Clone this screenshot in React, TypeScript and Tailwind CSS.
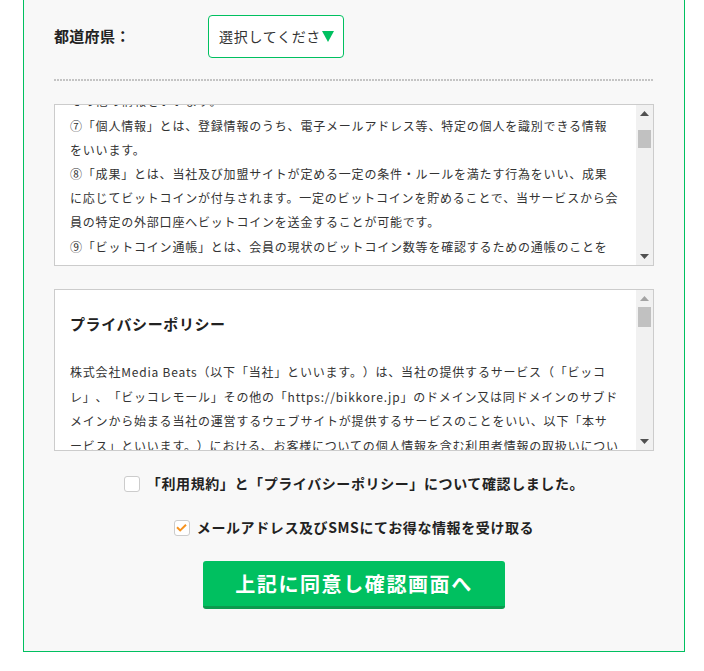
import { useEffect, useRef } from 'react';

const FONT = { fontFamily: '"Noto Sans CJK JP", "Noto Sans", sans-serif' };

// 利用規約（途中までスクロールした状態で表示）
const termsBefore = [
  '⑤「会員」とは、本規約に同意の上、当社所定の手続きにより登録を行った個人をいいます。',
  '⑥「登録情報」とは、会員が本サービスの利用にあたり当社に提供した氏名、住所、生年月日その他の情報をいいます。',
];

const termsAfter = [
  '⑧「成果」とは、当社及び加盟サイトが定める一定の条件・ルールを満たす行為をいい、成果に応じてビットコインが付与されます。一定のビットコインを貯めることで、当サービスから会員の特定の外部口座へビットコインを送金することが可能です。',
  '⑨「ビットコイン通帳」とは、会員の現状のビットコイン数等を確認するための通帳のことをいいます。',
  '⑩「加盟サイト」とは、本サービスに広告を掲載し、会員に対して商品またはサービスを提供する事業者のウェブサイトをいいます。',
  '第3条（規約の変更）',
  '当社は、会員の事前の承諾を得ることなく、本規約を随時変更できるものとします。変更後の本規約は、当社が別途定める場合を除き、本サービス上に表示した時点より効力を生じるものとします。',
  '第4条（会員登録）',
  '本サービスの利用を希望する者は、本規約に同意の上、当社所定の方法により会員登録を申請するものとします。当社は、当社の基準に従って登録の可否を判断し、当社が登録を認めた場合にはその旨を通知します。',
  '第5条（アカウントの管理）',
  '会員は、自己の責任においてメールアドレス及びパスワードを管理するものとし、これを第三者に利用させ、または貸与、譲渡、売買等をしてはならないものとします。',
  '第6条（ビットコインの付与）',
  '当社は、会員が成果の条件を満たした場合、当社所定の数のビットコインを付与します。付与の時期及び数量は、加盟サイトごとに当社が別途定めるところによります。',
];

// 見た目用のスクロールバー（クラシック表示）
function ScrollBar({ thumbTop, thumbHeight, atTop }: { thumbTop: number; thumbHeight: number; atTop?: boolean }) {
  return (
    <div className="absolute top-0 right-0 bottom-0 flex w-[17px] flex-col bg-[#f1f1f1]">
      <div className="flex h-[17px] items-center justify-center">
        <svg width="9" height="5" viewBox="0 0 9 5">
          <polygon points="0,5 9,5 4.5,0" fill={atTop ? '#a3a3a3' : '#505050'} />
        </svg>
      </div>
      <div className="absolute right-[2px] left-[2px] bg-[#c1c1c1]" style={{ top: thumbTop, height: thumbHeight }} />
      <div className="mt-auto flex h-[17px] items-center justify-center">
        <svg width="9" height="5" viewBox="0 0 9 5">
          <polygon points="0,0 9,0 4.5,5" fill="#505050" />
        </svg>
      </div>
    </div>
  );
}

export default function App() {
  const termsRef = useRef<HTMLDivElement>(null);
  const anchorRef = useRef<HTMLParagraphElement>(null);

  useEffect(() => {
    const box = termsRef.current;
    const el = anchorRef.current;
    if (!box || !el) return;
    const offset = el.getBoundingClientRect().top - box.getBoundingClientRect().top + box.scrollTop;
    box.scrollTop = offset - 9;
  }, []);

  return (
    <div className="min-h-screen bg-white [text-spacing-trim:space-all]" style={FONT}>
      <div className="ml-[23px] w-[662px] border-x border-b border-[#00c060] bg-[#f8f8f8] px-[30px] pt-[15px] pb-[42px] text-[#222]">
        {/* 都道府県 */}
        <div className="flex items-center">
          <div className="w-[154px] text-[15px] font-bold tracking-[0.3px]">都道府県：</div>
          <div className="flex h-[43px] w-[136px] items-center overflow-hidden rounded-[4px] border border-[#00c060] bg-white pl-[10px]">
            <span className="overflow-hidden whitespace-nowrap text-[14px] tracking-[0.7px] text-[#333]">選択してくださ</span>
            <svg width="12" height="11" viewBox="0 0 12 11" className="ml-[1px] shrink-0">
              <polygon points="0,0 12,0 6,11" fill="#00c060" />
            </svg>
          </div>
        </div>

        <div className="mt-[21px] h-[2px] bg-[repeating-linear-gradient(90deg,#c4c4c4_0_2px,transparent_2px_3px)]" />

        {/* 利用規約 */}
        <div className="relative mt-[23px] h-[162px] border border-[#ccc] bg-white">
          <div
            ref={termsRef}
            className="h-full overflow-hidden pt-[16px] pr-[34px] pb-[16px] pl-[15px] text-[12px] leading-[24.2px] tracking-[0.8px] text-[#333]"
          >
            {termsBefore.map((t) => (
              <p key={t}>{t}</p>
            ))}
            <p ref={anchorRef}>⑦「個人情報」とは、登録情報のうち、電子メールアドレス等、特定の個人を識別できる情報をいいます。</p>
            {termsAfter.map((t) => (
              <p key={t}>{t}</p>
            ))}
          </div>
          <ScrollBar thumbTop={25} thumbHeight={18} />
        </div>

        {/* プライバシーポリシー */}
        <div className="relative mt-[23px] h-[162px] border border-[#ccc] bg-white">
          <div className="h-full overflow-hidden pt-[22px] pr-[34px] pb-[16px] pl-[15px] text-[#333]">
            <h2 className="mb-[24px] text-[15px] font-bold leading-[24px] tracking-[0.6px] text-[#222]">プライバシーポリシー</h2>
            <div className="space-y-[10px] text-[12px] leading-[24.7px] tracking-[0.8px]">
              <p>
                株式会社Media Beats（以下「当社」といいます。）は、当社の提供するサービス（「ビッコレ」、「ビッコレモール」その他の「https://bikkore.jp」のドメイン又は同ドメインのサブドメインから始まる当社の運営するウェブサイトが提供するサービスのことをいい、以下「本サービス」といいます。）における、お客様についての個人情報を含む利用者情報の取扱いについて、以下のとおりプライバシーポリシー（以下「本ポリシー」といいます。）を定めます。
              </p>
              <p className="font-bold">1. 収集する利用者情報及び収集方法</p>
              <p>
                本ポリシーにおいて、「利用者情報」とは、お客様の識別に係る情報、通信サービス上の行動履歴、その他お客様またはお客様の端末に関連して生成または蓄積された情報を意味するものとします。
              </p>
            </div>
          </div>
          <ScrollBar thumbTop={17} thumbHeight={20} atTop />
        </div>

        {/* 同意チェック */}
        <div className="mt-[22px] flex items-center justify-center">
          <span className="h-[16px] w-[16px] shrink-0 rounded-[3px] border border-[#ccc] bg-white" />
          <span className="ml-[7px] text-[14px] font-bold tracking-[0.6px]">「利用規約」と「プライバシーポリシー」について確認しました。</span>
        </div>
        <div className="mt-[23px] flex items-center justify-center">
          <span className="flex h-[16px] w-[16px] shrink-0 items-center justify-center rounded-[3px] border border-[#ccc] bg-white">
            <svg width="11" height="8" viewBox="0 0 11 8">
              <polyline points="1,3.2 4.2,6.4 10,0.8" fill="none" stroke="#f7931e" strokeWidth="2" />
            </svg>
          </span>
          <span className="ml-[7px] text-[14px] font-bold tracking-[0.6px]">メールアドレス及びSMSにてお得な情報を受け取る</span>
        </div>

        <div className="mt-[23px] flex justify-center">
          <button
            type="button"
            className="h-[48px] w-[302px] rounded-[3px] border-b-[3px] border-[#0c9a4e] bg-[#00c060] text-[20px] font-bold tracking-[1.6px] text-white"
          >
            上記に同意し確認画面へ
          </button>
        </div>
      </div>
    </div>
  );
}
